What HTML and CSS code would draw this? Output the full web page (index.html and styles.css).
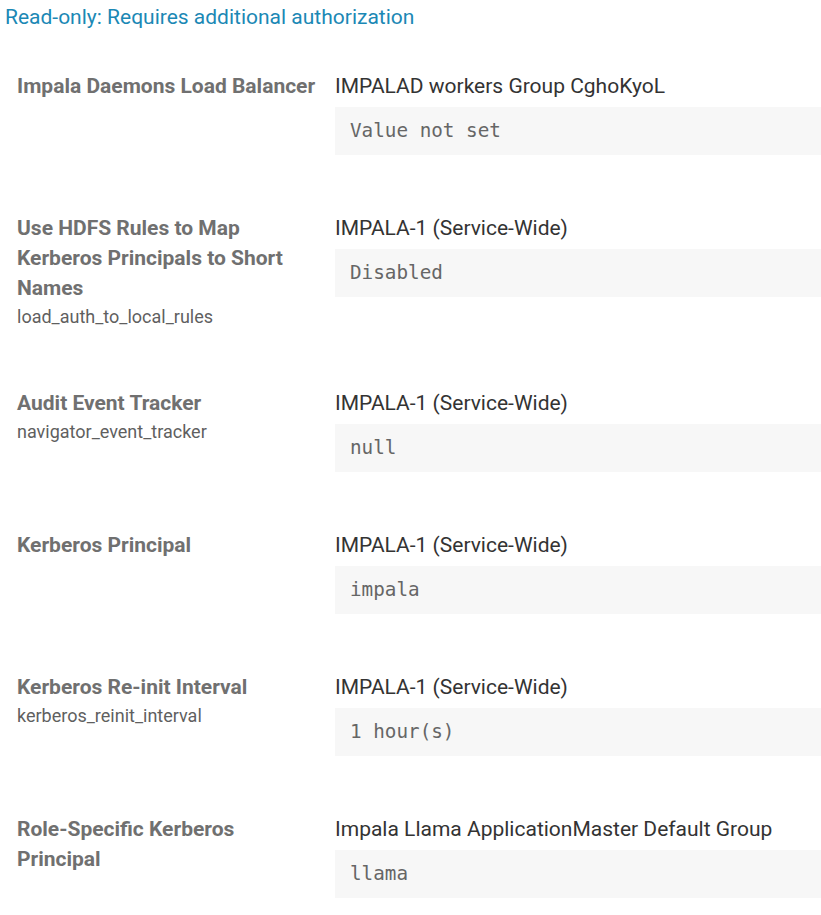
FILE: index.html
```html
<!DOCTYPE html>
<html>
<head>
<meta charset="utf-8">
<link rel="stylesheet" href="styles.css">
</head>
<body>
<div class="notice">Read-only: Requires additional authorization</div>
<div class="list">
  <div class="row">
    <div class="label"><div class="name">Impala Daemons Load Balancer</div></div>
    <div class="value">
      <div class="scope">IMPALAD workers Group CghoKyoL</div>
      <div class="box">Value not set</div>
    </div>
  </div>
  <div class="row">
    <div class="label"><div class="name">Use HDFS Rules to Map Kerberos Principals to Short Names</div><div class="key">load_auth_to_local_rules</div></div>
    <div class="value">
      <div class="scope">IMPALA-1 (Service-Wide)</div>
      <div class="box">Disabled</div>
    </div>
  </div>
  <div class="row">
    <div class="label"><div class="name">Audit Event Tracker</div><div class="key">navigator_event_tracker</div></div>
    <div class="value">
      <div class="scope">IMPALA-1 (Service-Wide)</div>
      <div class="box">null</div>
    </div>
  </div>
  <div class="row">
    <div class="label"><div class="name">Kerberos Principal</div></div>
    <div class="value">
      <div class="scope">IMPALA-1 (Service-Wide)</div>
      <div class="box">impala</div>
    </div>
  </div>
  <div class="row">
    <div class="label"><div class="name">Kerberos Re-init Interval</div><div class="key">kerberos_reinit_interval</div></div>
    <div class="value">
      <div class="scope">IMPALA-1 (Service-Wide)</div>
      <div class="box">1 hour(s)</div>
    </div>
  </div>
  <div class="row">
    <div class="label"><div class="name">Role-Specific Kerberos Principal</div></div>
    <div class="value">
      <div class="scope">Impala Llama ApplicationMaster Default Group</div>
      <div class="box">llama</div>
    </div>
  </div>
</div>
</body>
</html>
```
FILE: styles.css
```css
html, body {
  margin: 0;
  padding: 0;
  background: #ffffff;
  font-family: Roboto, "Liberation Sans", sans-serif;
}
.notice {
  color: #1b88b5;
  font-size: 21px;
  line-height: 34px;
  padding-left: 5px;
}
.list {
  padding-top: 37px;
}
.row {
  display: flex;
  gap: 16px;
  padding-left: 17px;
  padding-bottom: 58px;
}
.label {
  width: 302px;
  flex: none;
}
.name {
  font-weight: 700;
  font-size: 21px;
  line-height: 30px;
  color: #707070;
}
.key {
  font-size: 18px;
  line-height: 27px;
  color: #5f5f5f;
}
.value {
  flex: 1;
  min-width: 0;
}
.scope {
  font-size: 21px;
  line-height: 30px;
  color: #333333;
  margin-bottom: 6px;
}
.box {
  background: #f7f7f7;
  height: 48px;
  line-height: 48px;
  padding-left: 15px;
  font-family: "DejaVu Sans Mono", "Liberation Mono", monospace;
  font-size: 19.3px;
  color: #666666;
}
```
